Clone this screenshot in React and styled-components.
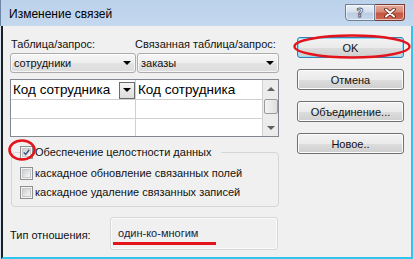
import React from 'react';
import styled, { createGlobalStyle } from 'styled-components';

const Global = createGlobalStyle`
  html, body { margin: 0; padding: 0; background: #f0f0f0; }
  body { font-family: "Liberation Sans", Arial, sans-serif; font-size: 11px; color: #111; }
  * { box-sizing: border-box; }
`;

const Window = styled.div`
  width: 413px;
  height: 259px;
  display: flex;
  flex-direction: column;
  overflow: hidden;
  background: #d9e6f4;
`;

const TitleBar = styled.div`
  height: 26px;
  flex: none;
  display: flex;
  align-items: flex-start;
  padding: 0 8px 0 8px;
  background: linear-gradient(#bcd2eb, #c4d8ee);
  border-left: 1px solid #6d86a6;
`;

const Title = styled.div`
  font-size: 12px;
  line-height: 16px;
  padding-top: 6px;
  color: #000;
`;

const Caption = styled.div`
  margin-left: auto;
  margin-top: 4px;
  display: flex;
`;

const CapButton = styled.div`
  width: 30px;
  height: 17px;
  display: flex;
  align-items: center;
  justify-content: center;
  border: 1px solid ${p => (p.$close ? '#7a3a31' : '#6f7f98')};
  border-radius: ${p => (p.$close ? '0 0 4px 0' : '0 0 0 4px')};
  border-left-width: ${p => (p.$close ? '0' : '1px')};
  background: ${p =>
    p.$close
      ? 'linear-gradient(#e6a999 0%, #d78a78 45%, #c45542 55%, #cf6a55 100%)'
      : 'linear-gradient(#e9eff7 0%, #d6e1ee 45%, #bccde2 55%, #c9d8ea 100%)'};
  box-shadow: inset 0 0 0 1px rgba(255, 255, 255, 0.55);
`;

const HelpGlyph = styled.span`
  font-family: "DejaVu Sans", sans-serif;
  font-weight: bold;
  font-size: 12px;
  color: #fff;
  -webkit-text-stroke: 0.8px #4a5a72;
  line-height: 1;
`;

const Body = styled.div`
  flex: 1;
  display: flex;
  gap: 18px;
  margin-left: 1px;
  padding: 10px 7px 0 7px;
  background: #f0f0f0;
  border-left: 2px solid #1e1e1e;
  border-right: 2px solid #2ec6ef;
  border-bottom: 2px solid #2ec6ef;
`;

const LeftCol = styled.div`
  width: 269px;
  display: flex;
  flex-direction: column;
`;

const SelectGrid = styled.div`
  display: grid;
  grid-template-columns: 126px 1fr;
  column-gap: 1px;
  row-gap: 1px;
`;

const FieldLabel = styled.div`
  line-height: 16px;
  padding-left: ${p => (p.$shift ? '0' : '1px')};
  margin-left: ${p => (p.$shift ? '-2px' : '0')};
  white-space: nowrap;
`;

const Combo = styled.div`
  height: 20px;
  display: flex;
  align-items: center;
  padding: 0 4px 0 3px;
  border: 1px solid #acacac;
  border-radius: 3px;
  background: linear-gradient(#f6f6f6 0%, #eeeeee 50%, #e3e3e3 51%, #dcdcdc 100%);
  box-shadow: inset 0 0 0 1px rgba(255, 255, 255, 0.7);
`;

const ComboText = styled.span`
  flex: 1;
  line-height: 16px;
`;

const Arrow = styled.span`
  width: 0;
  height: 0;
  border-left: 4px solid transparent;
  border-right: 4px solid transparent;
  border-top: 4px solid ${p => p.$color || '#000'};
  ${p => p.$up && `
    border-top: 0;
    border-bottom: 4px solid ${p.$color || '#000'};
  `}
`;

const Table = styled.div`
  margin-top: 6px;
  height: 58px;
  display: flex;
  border: 1px solid #828790;
  background: #fff;
`;

const Cells = styled.div`
  flex: 1;
  display: grid;
  grid-template-columns: 125px 1fr;
  grid-template-rows: 20px 19px 1fr;
`;

const Cell = styled.div`
  display: flex;
  align-items: center;
  border-right: 1px solid #d0d0d0;
  border-bottom: ${p => (p.$last ? '0' : '1px solid #d0d0d0')};
  padding-left: 2px;
  font-size: 13.5px;
  line-height: 18px;
  padding-top: 1px;
  color: #000;
`;

const CellText = styled.span`
  flex: 1;
  white-space: nowrap;
`;

const CellDrop = styled.div`
  width: 16px;
  height: 17px;
  display: flex;
  align-items: center;
  justify-content: center;
  border: 1px solid #6b6b6b;
  background: linear-gradient(#f4f4f4, #dcdcdc);
`;

const ScrollBar = styled.div`
  width: 15px;
  display: flex;
  flex-direction: column;
  align-items: center;
  background: #ececec;
`;

const ScrollBtn = styled.div`
  height: 17px;
  width: 100%;
  display: flex;
  align-items: center;
  justify-content: center;
`;

const Thumb = styled.div`
  width: 14px;
  height: 15px;
  margin-top: 2px;
  border: 1px solid #9a9a9a;
  border-radius: 2px;
  background: linear-gradient(90deg, #f3f3f3, #dedede);
`;

const Spacer = styled.div`
  flex: 1;
`;

const Group = styled.fieldset`
  margin: 7px 0 0 1px;
  padding: 4px 0 5px 8px;
  min-width: 0;
  border: 1px solid #d5d5d5;
  border-radius: 4px;
  display: flex;
  flex-direction: column;
  gap: 1px;
`;

const Legend = styled.legend`
  padding: 0 10px 0 0;
  display: flex;
  align-items: center;
  height: 16px;
`;

const CheckRow = styled.div`
  display: flex;
  align-items: center;
  height: 18px;
`;

const CheckWrap = styled.div`
  position: relative;
  width: 13px;
  height: 13px;
  margin-right: 2px;
  flex: none;
`;

const Box = styled.div`
  width: 13px;
  height: 13px;
  border: 1px solid #8e8f8f;
  background: #f4f4f4;
  padding: 1px;
`;

const BoxInner = styled.div`
  width: 100%;
  height: 100%;
  background: linear-gradient(135deg, #cbcfd5, #f6f6f6);
  border: 1px solid #c8c8c8;
  display: flex;
  align-items: center;
  justify-content: center;
`;

const CheckText = styled.span`
  line-height: 16px;
  white-space: nowrap;
`;

const RedRing = styled.svg`
  position: absolute;
  pointer-events: none;
  overflow: visible;
`;

const TypeRow = styled.div`
  margin-top: 10px;
  display: flex;
  align-items: center;
`;

const TypeLabel = styled.div`
  width: 100px;
  line-height: 16px;
  margin-top: 2px;
`;

const TypeBox = styled.div`
  width: 168px;
  height: 33px;
  display: flex;
  align-items: center;
  padding-left: 7px;
  padding-bottom: 2px;
  border: 1px solid #d8d8d8;
  border-radius: 3px;
  box-shadow: inset 0 0 0 1px #fafafa;
`;

const TypeValue = styled.span`
  position: relative;
  color: #1a1d3a;
  line-height: 16px;
`;

const Underline = styled.span`
  position: absolute;
  left: -5px;
  top: 17px;
  width: 103px;
  height: 3px;
  background: #e3141c;
`;

const RightCol = styled.div`
  display: flex;
  flex-direction: column;
  gap: 11px;
  padding-top: 1px;
`;

const Button = styled.div`
  position: relative;
  width: 107px;
  height: 21px;
  display: flex;
  align-items: center;
  justify-content: center;
  border: 1px solid ${p => (p.$default ? '#3c7fb1' : '#707070')};
  border-radius: 3px;
  background: linear-gradient(#f2f2f2 0%, #ebebeb 50%, #dddddd 51%, #cfcfcf 100%);
  box-shadow: inset 0 0 0 1px ${p => (p.$default ? '#8fdcf8' : '#fcfcfc')};
  line-height: 16px;
`;

function Check({ checked, ring }) {
  return (
    <CheckWrap>
      <Box>
        <BoxInner>
          {checked && (
            <svg width="9" height="9" viewBox="0 0 9 9">
              <path d="M1 4.5 L3.5 7 L8 1" fill="none" stroke="#3d4f86" strokeWidth="1.8" />
            </svg>
          )}
        </BoxInner>
      </Box>
      {ring && (
        <RedRing width="28" height="22" style={{ left: -12, top: -7 }}>
          <ellipse cx="14" cy="11" rx="12.5" ry="9.5" fill="none" stroke="#e3141c" strokeWidth="2.6" />
        </RedRing>
      )}
    </CheckWrap>
  );
}

export default function App() {
  return (
    <>
      <Global />
      <Window>
        <TitleBar>
          <Title>Изменение связей</Title>
          <Caption>
            <CapButton>
              <HelpGlyph>?</HelpGlyph>
            </CapButton>
            <CapButton $close>
              <svg width="12" height="10" viewBox="0 0 12 10">
                <path d="M2 1.5 L10 8.5 M10 1.5 L2 8.5" stroke="#5a1d14" strokeWidth="3.6" strokeLinecap="round" />
                <path d="M2 1.5 L10 8.5 M10 1.5 L2 8.5" stroke="#fff" strokeWidth="2" strokeLinecap="round" />
              </svg>
            </CapButton>
          </Caption>
        </TitleBar>
        <Body>
          <LeftCol>
            <SelectGrid>
              <FieldLabel>Таблица/запрос:</FieldLabel>
              <FieldLabel $shift>Связанная таблица/запрос:</FieldLabel>
              <Combo>
                <ComboText>сотрудники</ComboText>
                <Arrow />
              </Combo>
              <Combo>
                <ComboText>заказы</ComboText>
                <Arrow />
              </Combo>
            </SelectGrid>
            <Table>
              <Cells>
                <Cell>
                  <CellText>Код сотрудника</CellText>
                  <CellDrop>
                    <Arrow />
                  </CellDrop>
                </Cell>
                <Cell>
                  <CellText>Код сотрудника</CellText>
                </Cell>
                <Cell />
                <Cell />
                <Cell $last />
                <Cell $last />
              </Cells>
              <ScrollBar>
                <ScrollBtn>
                  <Arrow $up $color="#606060" />
                </ScrollBtn>
                <Thumb />
                <Spacer />
                <ScrollBtn>
                  <Arrow $color="#606060" />
                </ScrollBtn>
              </ScrollBar>
            </Table>
            <Group>
              <Legend>
                <Check checked ring />
                <CheckText>Обеспечение целостности данных</CheckText>
              </Legend>
              <CheckRow>
                <Check />
                <CheckText>каскадное обновление связанных полей</CheckText>
              </CheckRow>
              <CheckRow>
                <Check />
                <CheckText>каскадное удаление связанных записей</CheckText>
              </CheckRow>
            </Group>
            <TypeRow>
              <TypeLabel>Тип отношения:</TypeLabel>
              <TypeBox>
                <TypeValue>
                  один-ко-многим
                  <Underline />
                </TypeValue>
              </TypeBox>
            </TypeRow>
          </LeftCol>
          <RightCol>
            <Button $default>
              OK
              <RedRing width="118" height="25" style={{ left: -5, top: -4 }}>
                <ellipse cx="59" cy="12.5" rx="57.5" ry="11" fill="none" stroke="#e3141c" strokeWidth="2.4" />
              </RedRing>
            </Button>
            <Button>Отмена</Button>
            <Button>Объединение...</Button>
            <Button>Новое..</Button>
          </RightCol>
        </Body>
      </Window>
    </>
  );
}
